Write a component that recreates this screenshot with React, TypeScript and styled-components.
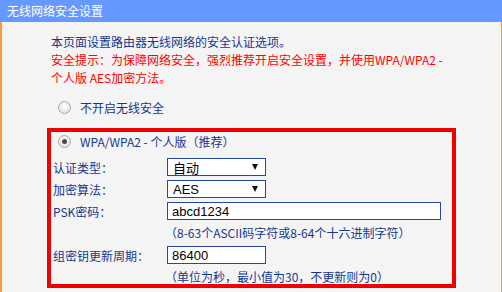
import styled, { createGlobalStyle } from 'styled-components'

const GlobalStyle = createGlobalStyle`
  html, body {
    margin: 0;
    padding: 0;
    background: #f4f4f4;
  }
  body {
    font-family: "Noto Sans CJK SC", "Liberation Sans", sans-serif;
    font-size: 12px;
  }
`;

function App() {
  return (
    <Page>
      <GlobalStyle />
      <Header>无线网络安全设置</Header>
      <Panel>
        <Intro>
          <p>本页面设置路由器无线网络的安全认证选项。</p>
          <Warn>安全提示：为保障网络安全，强烈推荐开启安全设置，并使用WPA/WPA2 -</Warn>
          <Warn>个人版 AES加密方法。</Warn>
        </Intro>
        <RadioRow>
          <Radio />
          <span>不开启无线安全</span>
        </RadioRow>
        <Box>
          <RadioRow $inside>
            <Radio $checked />
            <span>WPA/WPA2 - 个人版（推荐）</span>
          </RadioRow>
          <Field $first>
            <Label>认证类型：</Label>
            <Select>
              <span>自动</span>
              <Arrow />
            </Select>
          </Field>
          <Field>
            <Label>加密算法：</Label>
            <Select>
              <span>AES</span>
              <Arrow />
            </Select>
          </Field>
          <Field>
            <Label>PSK密码：</Label>
            <Input $wide defaultValue="abcd1234" />
          </Field>
          <Hint>（8-63个ASCII码字符或8-64个十六进制字符）</Hint>
          <Field>
            <Label>组密钥更新周期：</Label>
            <Input defaultValue="86400" />
          </Field>
          <Hint>（单位为秒，最小值为30，不更新则为0）</Hint>
        </Box>
      </Panel>
    </Page>
  )
}

const Page = styled.div`
  width: 502px;
  height: 292px;
  overflow: hidden;
  display: flex;
  flex-direction: column;
  color: #17378f;
`;

const Header = styled.div`
  height: 22px;
  line-height: 22px;
  background: #6699ff;
  color: #fff;
  padding-left: 7px;
  font-size: 12px;
`;

const Panel = styled.div`
  flex: 1;
  background: #f4f4f4;
  border-left: 2px solid #ff9a3c;
  border-right: 1px solid #ff9a3c;
  padding-top: 11px;
`;

const Intro = styled.div`
  padding-left: 49px;
  line-height: 18px;

  p {
    margin: 0;
  }
`;

const Warn = styled.p`
  color: #ff0000;
`;

const RadioRow = styled.div<{ $inside?: boolean }>`
  display: flex;
  align-items: center;
  height: 18px;
  gap: 9px;
  margin-top: ${p => (p.$inside ? 0 : 11)}px;
  padding-left: ${p => (p.$inside ? 7 : 56)}px;
`;

const Radio = styled.span<{ $checked?: boolean }>`
  width: 11px;
  height: 11px;
  border-radius: 50%;
  border: 1px solid #a9a9a9;
  background: radial-gradient(circle at 50% 40%, #ffffff 0%, #e6e6e6 70%, #d2d2d2 100%);
  display: flex;
  align-items: center;
  justify-content: center;

  &::after {
    content: '';
    display: ${p => (p.$checked ? 'block' : 'none')};
    width: 5px;
    height: 5px;
    border-radius: 50%;
    background: #4a4a4a;
  }
`;

const Box = styled.div`
  margin: 12px 0 0 45px;
  width: 401px;
  height: 152px;
  border: 4px solid #f20000;
`;

const Field = styled.div<{ $first?: boolean }>`
  display: flex;
  align-items: center;
  height: 18px;
  margin-top: ${p => (p.$first ? 8 : 4)}px;
`;

const Label = styled.div`
  width: 114px;
  padding-left: 2px;
  flex-shrink: 0;
`;

const Select = styled.div`
  box-sizing: border-box;
  width: 99px;
  height: 18px;
  border: 1px solid #2548a8;
  background: #fff;
  color: #000;
  font-family: "Liberation Sans", "Noto Sans CJK SC", sans-serif;
  font-size: 13px;
  display: flex;
  align-items: center;
  justify-content: space-between;
  padding: 0 7px 0 5px;
`;

const Arrow = styled.span`
  width: 0;
  height: 0;
  border-left: 3.5px solid transparent;
  border-right: 3.5px solid transparent;
  border-top: 6px solid #111;
`;

const Input = styled.input<{ $wide?: boolean }>`
  box-sizing: border-box;
  width: ${p => (p.$wide ? 274 : 99)}px;
  height: 18px;
  border: 1px solid #2548a8;
  background: #fff;
  color: #000;
  font-family: "Liberation Sans", "Noto Sans CJK SC", sans-serif;
  font-size: 13px;
  padding: 0 0 0 4px;
  margin: 0;
  outline: none;
`;

const Hint = styled.div`
  height: 18px;
  line-height: 18px;
  margin-top: 4px;
  padding-left: 114px;
`;

export default App
